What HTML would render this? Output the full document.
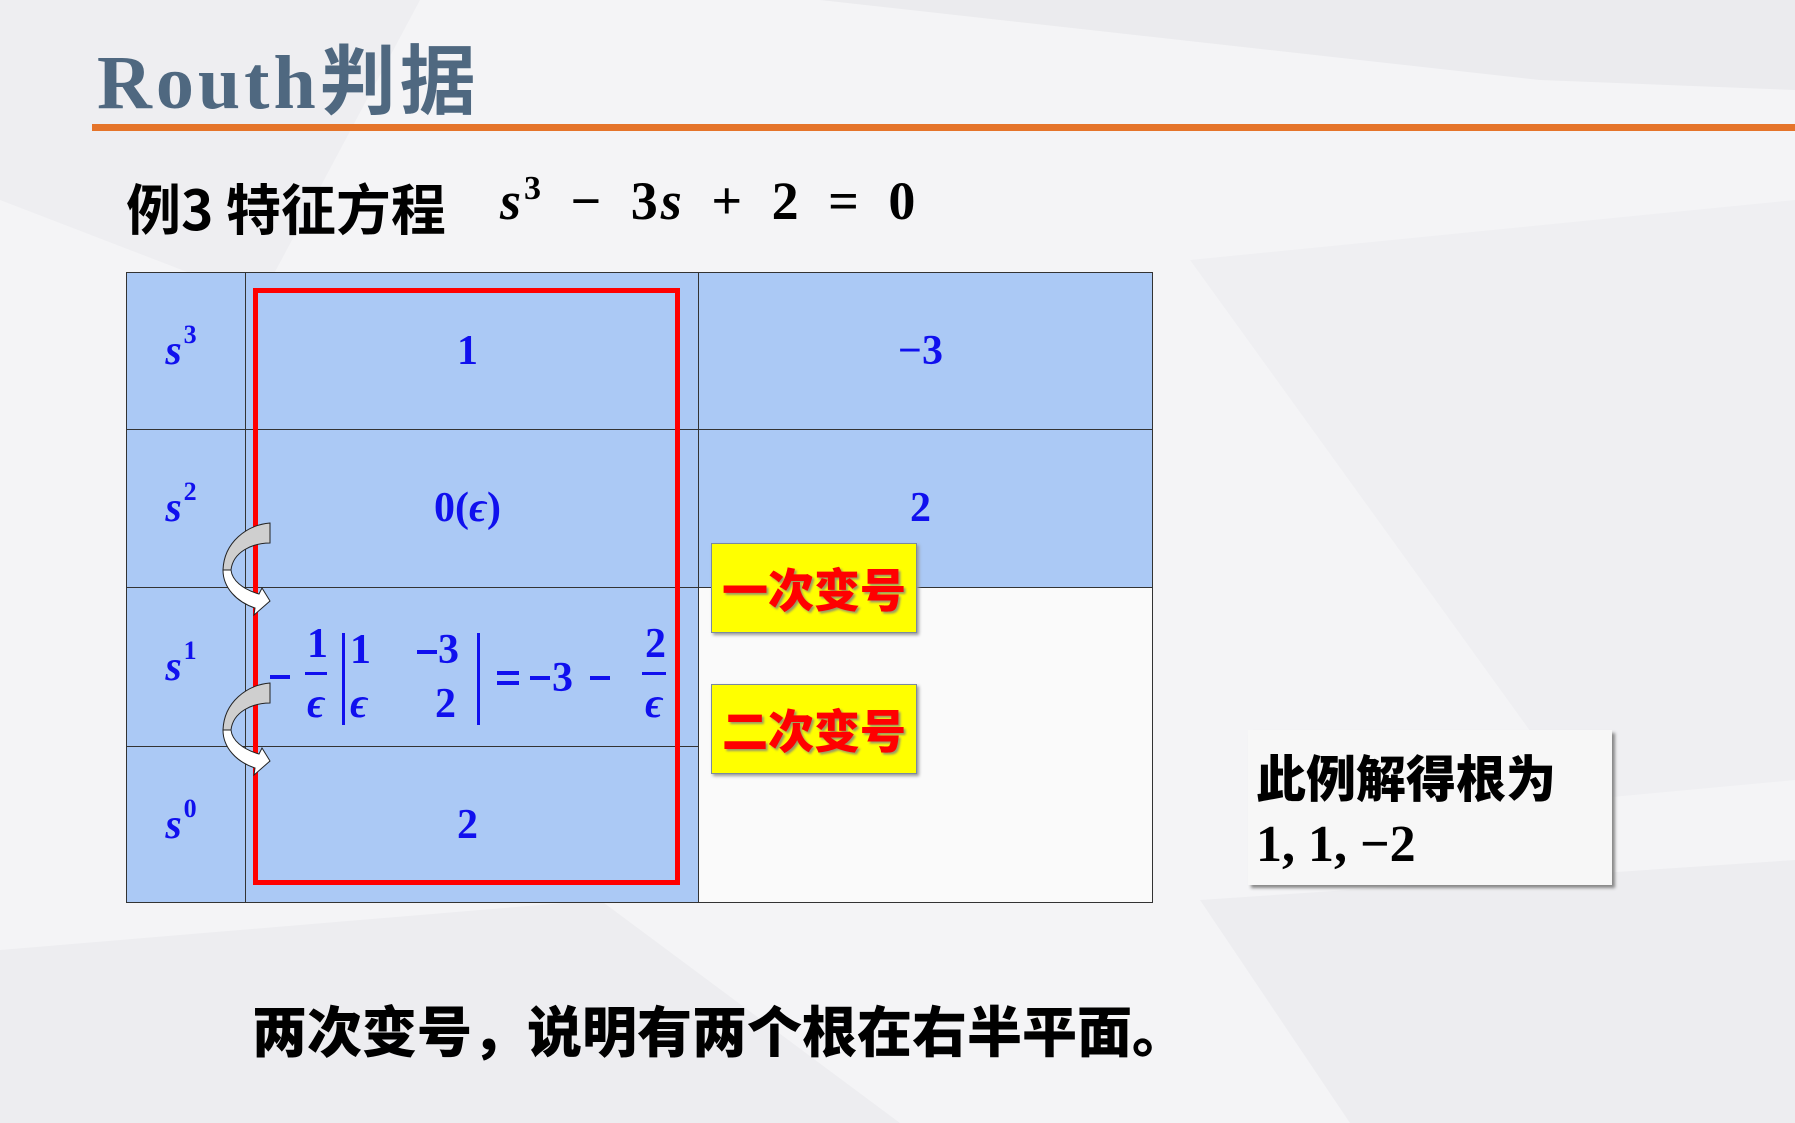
<!DOCTYPE html>
<html><head><meta charset="utf-8"><style>
body{margin:0;width:1795px;height:1123px;overflow:hidden;position:relative;background:#f4f4f6;font-family:"Liberation Sans","Noto Sans CJK SC",sans-serif;}
.abs{position:absolute;}
.m{font-family:"Liberation Serif","DejaVu Serif",serif;font-weight:bold;color:#1010ee;}
.cell{position:absolute;display:flex;align-items:center;justify-content:center;}
.sp{font-size:26px;position:relative;top:-16px;margin-left:2px}
</style></head><body>
<svg class="abs" style="left:0;top:0" width="1795" height="1123">
<polygon points="0,0 420,0 260,300 0,200" fill="#eeeef1"/>
<polygon points="820,0 1795,0 1795,90 1540,80" fill="#ebebee"/>
<polygon points="1190,260 1795,200 1795,780 1580,800" fill="#efeff2"/>
<polygon points="0,950 600,900 900,1123 0,1123" fill="#ededf0"/>
<polygon points="1200,900 1795,860 1795,1123 1350,1123" fill="#ededf0"/>
</svg>
<div class="abs" style="left:97px;top:20px;font-size:76px;font-weight:bold;color:#4f6880;font-family:'Liberation Serif','Noto Sans CJK SC',serif;letter-spacing:4px">Routh<span style="font-family:'Noto Sans CJK SC',sans-serif">判据</span></div>
<div class="abs" style="left:92px;top:124px;width:1703px;height:7px;background:#e5742a"></div>
<div class="abs" style="left:126px;top:166px;font-size:55px;font-weight:bold;color:#000;font-family:'Noto Sans CJK SC',sans-serif">例3 特征方程</div>
<div class="abs" style="left:500px;top:170px;font-size:54px;font-weight:bold;font-family:'Liberation Serif',serif;color:#000;word-spacing:10px;letter-spacing:3px"><i>s</i><span style="font-size:34px;position:relative;top:-20px">3</span> − 3<i>s</i> + 2 = 0</div>

<div class="abs" style="left:126px;top:272px;width:1027px;height:631px;background:#fafafa;border:1px solid #333;box-sizing:border-box"></div>
<div class="abs" style="left:127px;top:273px;width:571px;height:629px;background:#abc9f5"></div>
<div class="abs" style="left:698px;top:273px;width:454px;height:314px;background:#abc9f5"></div>
<div class="abs" style="left:245px;top:272px;width:1px;height:631px;background:#333"></div>
<div class="abs" style="left:698px;top:272px;width:1px;height:631px;background:#333"></div>
<div class="abs" style="left:126px;top:429px;width:1027px;height:1px;background:#333"></div>
<div class="abs" style="left:126px;top:587px;width:1027px;height:1px;background:#333"></div>
<div class="abs" style="left:126px;top:746px;width:572px;height:1px;background:#333"></div>

<div class="cell m" style="left:126px;top:272px;width:110px;height:157px;font-size:42px"><i>s</i><span class="sp">3</span></div>
<div class="cell m" style="left:126px;top:429px;width:110px;height:158px;font-size:42px"><i>s</i><span class="sp">2</span></div>
<div class="cell m" style="left:126px;top:587px;width:110px;height:159px;font-size:42px"><i>s</i><span class="sp">1</span></div>
<div class="cell m" style="left:126px;top:746px;width:110px;height:157px;font-size:42px"><i>s</i><span class="sp">0</span></div>
<div class="cell m" style="left:245px;top:272px;width:445px;height:157px;font-size:42px">1</div>
<div class="cell m" style="left:698px;top:272px;width:445px;height:157px;font-size:42px">−3</div>
<div class="cell m" style="left:245px;top:429px;width:445px;height:158px;font-size:42px">0(<i>ϵ</i>)</div>
<div class="cell m" style="left:698px;top:429px;width:445px;height:158px;font-size:42px">2</div>
<div class="cell m" style="left:245px;top:746px;width:445px;height:157px;font-size:42px">2</div>
<svg class="abs" style="left:260px;top:615px" width="420" height="110">
<g font-family="Liberation Serif,serif" font-weight="bold" fill="#1010ee" font-size="42">
<rect x="10" y="60" width="20" height="4"/>
<text x="47" y="42">1</text><rect x="45" y="57" width="22" height="3"/><text x="47" y="102" font-style="italic">ϵ</text>
<rect x="82" y="18" width="3" height="92"/>
<text x="90" y="48">1</text><text x="90" y="102" font-style="italic">ϵ</text>
<rect x="157" y="35" width="20" height="4"/><text x="178" y="48">3</text><text x="175" y="102">2</text>
<rect x="217" y="18" width="3" height="92"/>
<rect x="237" y="56" width="22" height="4"/><rect x="237" y="66" width="22" height="4"/>
<rect x="270" y="61" width="20" height="4"/><text x="292" y="76">3</text>
<rect x="330" y="61" width="20" height="4"/>
<text x="385" y="42">2</text><rect x="382" y="57" width="24" height="3"/><text x="385" y="102" font-style="italic">ϵ</text>
</g></svg>
<div class="abs" style="left:253px;top:288px;width:427px;height:597px;border:5px solid #ff0000;box-sizing:border-box"></div>
<svg class="abs" style="left:222px;top:522px" width="50" height="95"><path d="M48,1 L48,21 C30,21 11,30 9,48 L1,48 C2,20 25,3 48,1 Z" fill="#cfcfcf" stroke="#222" stroke-width="1"/><path d="M1,48 C1,66 15,80 33,86 L32,93 L48,79 L40,66 L37,72 C20,67 10,58 9,48 Z" fill="#fff" stroke="#222" stroke-width="1"/></svg>
<svg class="abs" style="left:222px;top:682px" width="50" height="95"><path d="M48,1 L48,21 C30,21 11,30 9,48 L1,48 C2,20 25,3 48,1 Z" fill="#cfcfcf" stroke="#222" stroke-width="1"/><path d="M1,48 C1,66 15,80 33,86 L32,93 L48,79 L40,66 L37,72 C20,67 10,58 9,48 Z" fill="#fff" stroke="#222" stroke-width="1"/></svg>

<div class="cell" style="left:711px;top:543px;width:206px;height:90px;background:#ffff00;border:1px solid #7a8aa0;box-sizing:border-box;box-shadow:2px 2px 3px #999;font-family:'Noto Sans CJK SC',sans-serif;font-weight:900;font-size:46px;color:#ff0000;text-shadow:2px 2px 2px #996">一次变号</div>
<div class="cell" style="left:711px;top:684px;width:206px;height:90px;background:#ffff00;border:1px solid #7a8aa0;box-sizing:border-box;box-shadow:2px 2px 3px #999;font-family:'Noto Sans CJK SC',sans-serif;font-weight:900;font-size:46px;color:#ff0000;text-shadow:2px 2px 2px #996">二次变号</div>

<div class="abs" style="left:1248px;top:730px;width:364px;height:155px;background:#f7f7f7;box-shadow:3px 3px 3px #888"></div>
<div class="abs" style="left:1256px;top:740px;font-size:50px;font-weight:900;font-family:'Noto Sans CJK SC',sans-serif;color:#000">此例解得根为</div>
<div class="abs" style="left:1256px;top:815px;font-size:52px;font-weight:bold;font-family:'Liberation Serif',serif;color:#000">1, 1, −2</div>

<div class="abs" style="left:252px;top:988px;font-size:55px;font-weight:900;font-family:'Noto Sans CJK SC',sans-serif;color:#000">两次变号，说明有两个根在右半平面。</div>
</body></html>
